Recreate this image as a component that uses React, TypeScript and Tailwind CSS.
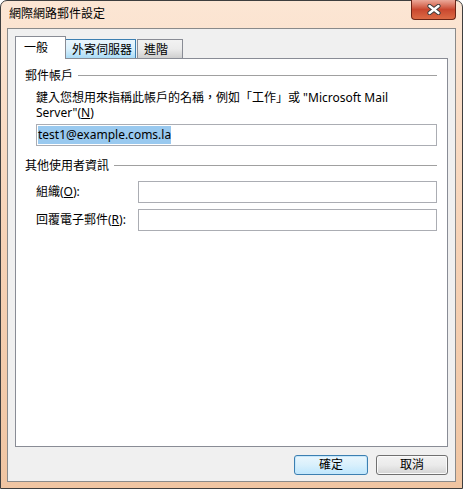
const font = { fontFamily: '"Segoe UI", "Noto Sans", "Noto Sans CJK TC", sans-serif' }

function GroupHeader({ label }: { label: string }) {
  return (
    <div className="flex h-[15px] items-center">
      <span className="leading-[15px]">{label}</span>
      <div className="ml-[5px] h-px flex-1 bg-[#a0a0a0]" />
    </div>
  )
}

function TextBox({ children }: { children?: React.ReactNode }) {
  return (
    <div className="flex h-[22px] flex-1 items-center border border-[#abadb3] bg-white px-[1px]">
      {children}
    </div>
  )
}

export default function App() {
  return (
    <div
      className="flex h-[489px] w-[463px] flex-col rounded-t-[7px] border border-[#3e3e3e] bg-gradient-to-b from-[#fce6d4] via-[#f6d2b6] to-[#f0c5a2] px-[6px] pb-[6px] text-[12px] text-black"
      style={font}
    >
      {/* title bar */}
      <div className="flex h-[27px] shrink-0 items-start justify-between">
        <span className="pl-[2px] pt-[5px] leading-[16px]">網際網路郵件設定</span>
        <div className="-mt-px flex h-[20px] w-[45px] items-center justify-center rounded-b-[4px] border border-t-0 border-[#6b2517] bg-gradient-to-b from-[#eba899] via-[#c9472f] to-[#dc6a45]">
          <svg width="16" height="11" viewBox="0 0 16 11">
            <path d="M3.5 2 L12.5 9 M12.5 2 L3.5 9" stroke="#3a3a3a" strokeWidth="4.2" strokeLinecap="round" />
            <path d="M3.5 2 L12.5 9 M12.5 2 L3.5 9" stroke="#ffffff" strokeWidth="2.4" strokeLinecap="round" />
          </svg>
        </div>
      </div>

      {/* client area */}
      <div className="flex flex-1 flex-col border border-[#8a8a8a] bg-[#f0f0f0] pb-[6px] pl-[7px] pr-[7px] pt-[7px]">
        {/* tabs */}
        <div className="flex h-[22px] items-end">
          <div className="relative z-10 -mb-px flex h-[23px] w-[51px] items-center border border-b-0 border-[#898c95] bg-white pl-[8px]">
            一般
          </div>
          <div className="-ml-px flex h-[19px] w-[71px] items-center border border-b-0 border-[#3c7fb1] bg-gradient-to-b from-[#eaf6fd] via-[#d9f0fc] to-[#a9dbf6] pl-[6px] pt-[1px]">
            外寄伺服器
          </div>
          <div className="ml-px flex h-[19px] w-[46px] items-center border border-b-0 border-[#898c95] bg-gradient-to-b from-[#f2f2f2] via-[#ebebeb] to-[#cfcfcf] pl-[6px] pt-[1px]">
            進階
          </div>
        </div>

        {/* tab panel */}
        <div className="flex-1 border border-[#898c95] bg-white pl-[9px] pr-[10px] pt-[9px]">
          <GroupHeader label="郵件帳戶" />
          <div className="pl-[11px]">
            <p className="mt-[7px] leading-[15px]">
              鍵入您想用來指稱此帳戶的名稱，例如「工作」或 "Microsoft Mail
              <br />
              Server"(<span className="underline underline-offset-1">N</span>)
            </p>
            <div className="mt-[4px] flex">
              <TextBox>
                <span className="bg-[#99c9ef] leading-[18px]">test1@example.coms.la</span>
              </TextBox>
            </div>
          </div>

          <div className="mt-[12px]">
            <GroupHeader label="其他使用者資訊" />
          </div>
          <div className="pl-[11px]">
            <div className="mt-[8px] flex items-center">
              <span className="w-[102px]">
                組織(<span className="underline underline-offset-1">O</span>):
              </span>
              <TextBox />
            </div>
            <div className="mt-[6px] flex items-center">
              <span className="w-[102px]">
                回覆電子郵件(<span className="underline underline-offset-1">R</span>):
              </span>
              <TextBox />
            </div>
          </div>
        </div>

        {/* buttons */}
        <div className="mt-[8px] flex justify-end gap-[8px]">
          <button className="flex h-[20px] w-[74px] items-center justify-center rounded-[3px] border border-[#3c7fb1] bg-gradient-to-b from-[#eaf6fd] via-[#d9f0fc] to-[#bee6fd] shadow-[inset_0_0_0_1px_#c5e7fb]">
            確定
          </button>
          <button className="flex h-[20px] w-[72px] items-center justify-center rounded-[3px] border border-[#707070] bg-gradient-to-b from-[#f2f2f2] via-[#ebebeb] to-[#d4d4d4] shadow-[inset_0_0_0_1px_#fafafa]">
            取消
          </button>
        </div>
      </div>
    </div>
  )
}
